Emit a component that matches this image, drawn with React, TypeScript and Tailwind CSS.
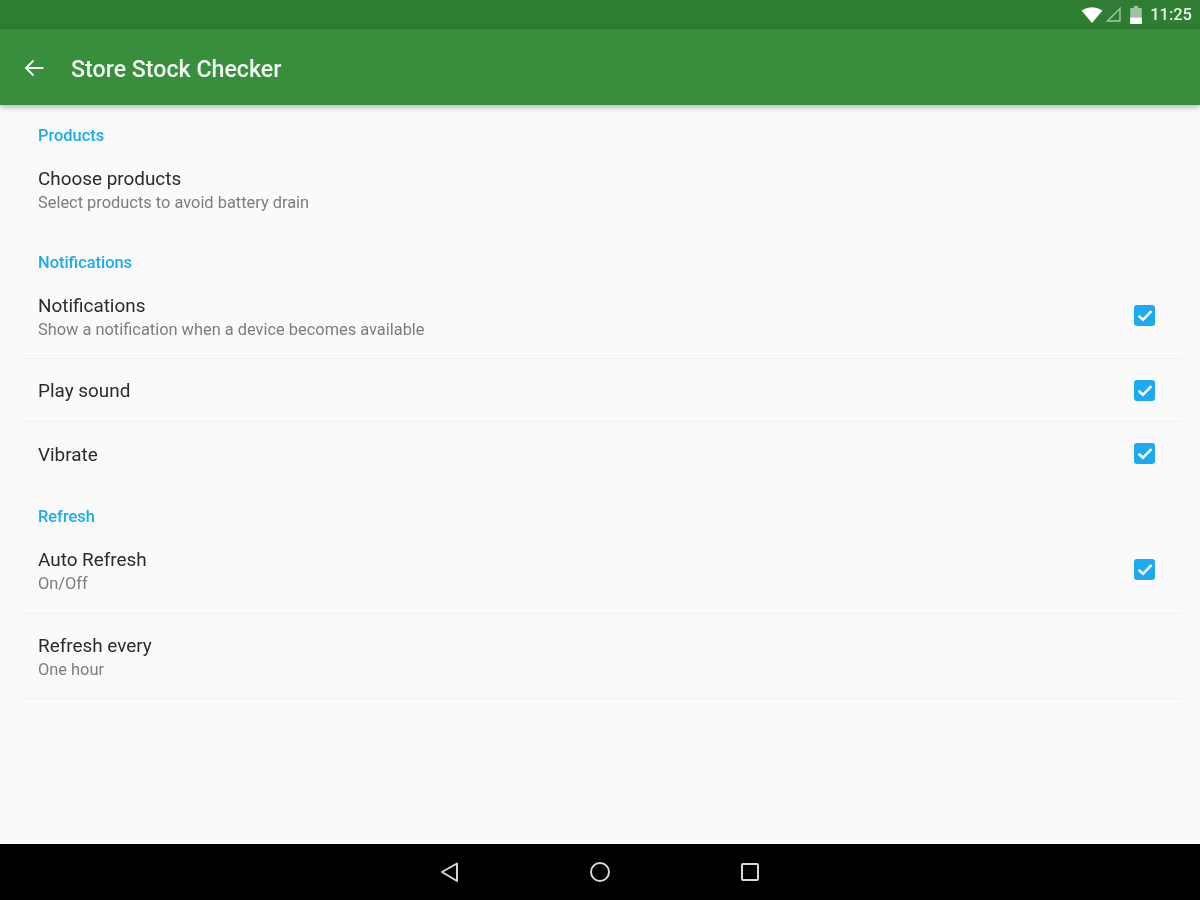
import React from "react";

function Check({ lift }: { lift?: boolean }) {
  return (
    <div className={`w-[21px] h-[21px] rounded-[3px] bg-[#1eaaf1] flex items-center justify-center shrink-0 ${lift ? "mb-[2px]" : ""}`}>
      <svg width="16" height="13" viewBox="0 0 15 12" fill="none">
        <path d="M1.5 6.2 L5.6 10 L13.5 1.8" stroke="#fff" strokeWidth="2.4" />
      </svg>
    </div>
  );
}

function Header({ children, className }: { children: React.ReactNode; className: string }) {
  return <div className={`${className} pl-[18px] text-[16.4px] leading-[20px] font-medium text-[#1eaaf1]`}>{children}</div>;
}

function Row({ title, sub, checked, divider, h }: { title: string; sub?: string; checked?: boolean; divider?: boolean; h: string }) {
  return (
    <div className={`${h} flex items-center justify-between pl-[18px] pr-[27px] ${divider ? "border-b border-[#f1f1f1]" : ""}`}>
      <div className="pt-[2px]">
        <div className="text-[18.9px] leading-[24px] text-[#2b2b2b]">{title}</div>
        {sub && <div className="text-[16.4px] leading-[22px] mt-[1px] text-[#7d7d7d]">{sub}</div>}
      </div>
      {checked && <Check lift={!!sub} />}
    </div>
  );
}

export default function App() {
  return (
    <div className="w-[1200px] h-[900px] flex flex-col bg-[#fafafa] overflow-hidden font-['Roboto',sans-serif]">
      <div className="h-[29px] bg-[#2e7d32] flex items-center justify-end pr-2 shrink-0">
        <div className="flex items-center blur-[0.5px]">
          <svg width="22" height="16" viewBox="0 0 21 16"><path d="M0 3.5 Q10.5 -3 21 3.5 L10.5 16 Z" fill="#fff" /></svg>
          <svg width="15" height="15" viewBox="0 0 15 15" fill="none" className="ml-[3px]"><path d="M1.5 14 L14 1.5 V14 Z" stroke="#a5c9a7" strokeWidth="1.4" /></svg>
          <svg width="12" height="18" viewBox="0 0 11 17" className="ml-[9px]"><path d="M3.5 0 H7.5 V2 H11 V17 H0 V2 H3.5 Z" fill="#9cc49f" /><rect y="11" width="11" height="6" fill="#fff" /></svg>
          <span className="ml-[8px] text-[16.5px] leading-[20px] font-medium text-[#edf5ee]">11:25</span>
        </div>
      </div>
      <div className="relative z-10 h-[76px] bg-[#388e3c] flex items-center shrink-0 shadow-[0_2px_6px_rgba(0,0,0,0.3)]">
        <div className="flex items-center pt-[2px] blur-[0.5px]">
          <svg width="20" height="18" viewBox="0 0 20 18" fill="none" className="ml-[24px]">
            <path d="M19.5 9 H2 M9.5 1.5 L2 9 L9.5 16.5" stroke="#f4f9f4" strokeWidth="2" />
          </svg>
          <div className="ml-[27px] pt-[2px] text-[23.2px] leading-[30px] font-medium text-[#f2f8f2]">Store Stock Checker</div>
        </div>
      </div>
      <main className="flex-1 ml-5 mr-[18px] blur-[0.5px]">
        <Header className="pt-[21px]">Products</Header>
        <Row h="h-[87px]" title="Choose products" sub="Select products to avoid battery drain" />
        <Header className="pt-[20px] pb-[1px]">Notifications</Header>
        <Row h="h-[85px]" title="Notifications" sub="Show a notification when a device becomes available" checked divider />
        <Row h="h-[63px]" title="Play sound" checked divider />
        <Row h="h-[63px]" title="Vibrate" checked />
        <Header className="pt-[22px]">Refresh</Header>
        <Row h="h-[87px]" title="Auto Refresh" sub="On/Off" checked divider />
        <Row h="h-[85px]" title="Refresh every" sub="One hour" divider />
      </main>
      <div className="h-[56px] bg-black flex items-center justify-center shrink-0">
        <div className="flex items-center gap-[128px] blur-[0.5px]">
          <svg width="22" height="22" viewBox="0 0 22 22" fill="none"><path d="M18 2.5 V20 L3 11 Z" stroke="#d8d8d8" strokeWidth="2" strokeLinejoin="round" /></svg>
          <svg width="22" height="22" viewBox="0 0 22 22" fill="none"><circle cx="11" cy="11" r="9" stroke="#d8d8d8" strokeWidth="2" /></svg>
          <svg width="22" height="22" viewBox="0 0 22 22" fill="none"><rect x="3" y="3" width="16" height="16" rx="1" stroke="#d8d8d8" strokeWidth="2" /></svg>
        </div>
      </div>
    </div>
  );
}
